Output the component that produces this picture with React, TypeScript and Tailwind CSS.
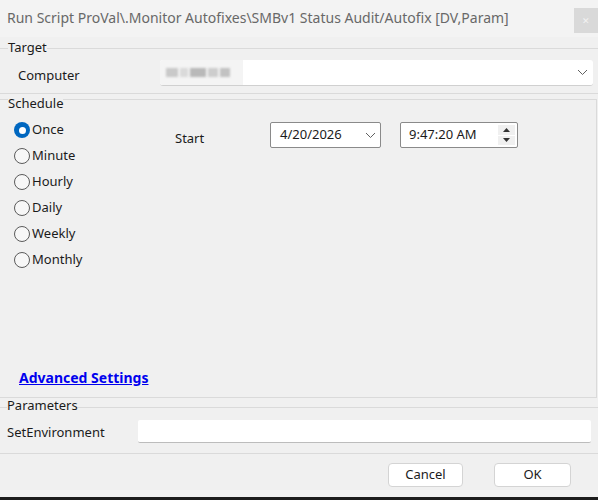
import React from "react";

const font = { fontFamily: '"Noto Sans", "Open Sans", sans-serif' };

function Radio({ label, checked }: { label: string; checked?: boolean }) {
  return (
    <div className="flex items-center h-[26px] gap-[2px]">
      {checked ? (
        <div className="w-[16px] h-[16px] rounded-full bg-[#0067c0] flex items-center justify-center">
          <div className="w-[7px] h-[7px] rounded-full bg-white" />
        </div>
      ) : (
        <div className="w-[16px] h-[16px] rounded-full border border-[#5b5b5b] bg-[#f7f7f7]" />
      )}
      <span className="text-[13px] text-[#1b1b1b]">{label}</span>
    </div>
  );
}

function Chevron({ className }: { className?: string }) {
  return (
    <svg width="11" height="7" viewBox="0 0 11 7" className={className}>
      <path d="M1 1 L5.5 5.5 L10 1" fill="none" stroke="#606060" strokeWidth="1" />
    </svg>
  );
}

export default function App() {
  return (
    <div className="w-[598px] h-[500px] bg-[#f0f0f0] flex flex-col overflow-hidden" style={font}>
      {/* Title bar */}
      <div className="h-[37px] shrink-0 flex items-start justify-between bg-[#f3f3f3]">
        <div className="pl-[7px] pt-[7px] text-[14px] text-[#686868] whitespace-nowrap">
          Run Script ProVal\.Monitor Autofixes\SMBv1 Status Audit/Autofix [DV,Param]
        </div>
        <div className="mt-[8px] w-[24px] h-[25px] bg-[#d9d9d9] flex items-center justify-center">
          <span className="text-[9px] text-[#f2f2f2] leading-none">✕</span>
        </div>
      </div>

      {/* Target */}
      <fieldset className="mt-[2px] shrink-0 border-t border-b border-[#dadada] h-[55px] pr-[5px]">
        <legend className="ml-[8px] text-[13px] text-[#1b1b1b] leading-[18px]">
          <span className="relative top-[-1px]">Target</span>
        </legend>
        <div className="flex items-center mt-[3px]">
          <span className="w-[160px] pl-[18px] pt-[5px] text-[13px] text-[#1b1b1b]">Computer</span>
          <div className="flex-1 h-[26px] flex items-stretch rounded-[3px] border-b border-[#d0d0d0] bg-white overflow-hidden">
            <div className="w-[83px] bg-[#f4f4f4] flex items-center pl-[6px] gap-[2px]">
              <div className="w-[12px] h-[9px] bg-[#c9c9c9] blur-[1px]" />
              <div className="w-[8px] h-[9px] bg-[#dadada] blur-[1px]" />
              <div className="w-[16px] h-[9px] bg-[#b9b9b9] blur-[1px]" />
              <div className="w-[10px] h-[9px] bg-[#cdcdcd] blur-[1px]" />
              <div className="w-[10px] h-[9px] bg-[#c2c2c2] blur-[1px]" />
            </div>
            <div className="flex-1" />
            <div className="w-[22px] flex items-center justify-center">
              <Chevron />
            </div>
          </div>
        </div>
      </fieldset>

      {/* Schedule */}
      <fieldset className="mt-[-4px] shrink-0 border-t border-b border-r border-[#dadada] h-[308px] mr-[1px]">
        <legend className="ml-[8px] text-[13px] text-[#1b1b1b] leading-[18px]">
          <span className="relative top-[4px]">Schedule</span>
        </legend>
        <div className="flex">
          <div className="pl-[14px] pt-[9px] w-[175px] flex flex-col">
            <Radio label="Once" checked />
            <Radio label="Minute" />
            <Radio label="Hourly" />
            <Radio label="Daily" />
            <Radio label="Weekly" />
            <Radio label="Monthly" />
          </div>
          <div className="flex items-start">
            <span className="w-[95px] pt-[21px] leading-[18px] text-[13px] text-[#1b1b1b]">Start</span>
            <div className="mt-[14px] w-[111px] h-[26px] bg-white border border-[#8a8a8a] rounded-[2px] flex items-center justify-between pl-[9px] pr-[4px]">
              <span className="text-[13px] text-[#1b1b1b]">4/20/2026</span>
              <Chevron />
            </div>
            <div className="ml-[19px] mt-[14px] w-[118px] h-[26px] bg-white border border-[#8a8a8a] rounded-[2px] flex items-center justify-between pl-[8px] pr-[2px]">
              <span className="text-[13px] text-[#1b1b1b]">9:47:20 AM</span>
              <div className="flex flex-col w-[17px] h-[20px] gap-[1px]">
                <div className="flex-1 bg-[#f0f0f0] flex items-center justify-center">
                  <svg width="7" height="4" viewBox="0 0 7 4"><path d="M0 4 L3.5 0 L7 4Z" fill="#333" /></svg>
                </div>
                <div className="flex-1 bg-[#f0f0f0] flex items-center justify-center">
                  <svg width="7" height="4" viewBox="0 0 7 4"><path d="M0 0 L3.5 4 L7 0Z" fill="#333" /></svg>
                </div>
              </div>
            </div>
          </div>
        </div>
        <div className="mt-[94px] pl-[19px] leading-[20px]">
          <a className="text-[14px] font-bold text-[#0000ee] underline">Advanced Settings</a>
        </div>
      </fieldset>

      {/* Parameters */}
      <fieldset className="shrink-0 border-t border-b border-[#dadada] h-[56px]">
        <legend className="ml-[7px] text-[13px] text-[#1b1b1b] leading-[18px]">
          <span className="relative top-[-2px]">Parameters</span>
        </legend>
        <div className="flex items-center mt-[4px]">
          <span className="w-[138px] pl-[7px] pt-[3px] text-[13px] text-[#1b1b1b]">SetEnvironment</span>
          <div className="w-[453px] h-[23px] bg-white border-b border-[#bcbcbc] rounded-[2px]" />
        </div>
      </fieldset>

      {/* Buttons */}
      <div className="flex justify-end gap-[31px] pr-[27px] pt-[9px]">
        <button className="w-[75px] h-[24px] bg-white border border-[#d4d4d4] rounded-[4px] text-[13px] text-[#1b1b1b]">Cancel</button>
        <button className="w-[77px] h-[24px] bg-white border border-[#d4d4d4] rounded-[4px] text-[13px] text-[#1b1b1b]">OK</button>
      </div>
      <div className="flex-1" />
      <div className="h-[3px] shrink-0 bg-[#1c1c1c]" />
    </div>
  );
}
